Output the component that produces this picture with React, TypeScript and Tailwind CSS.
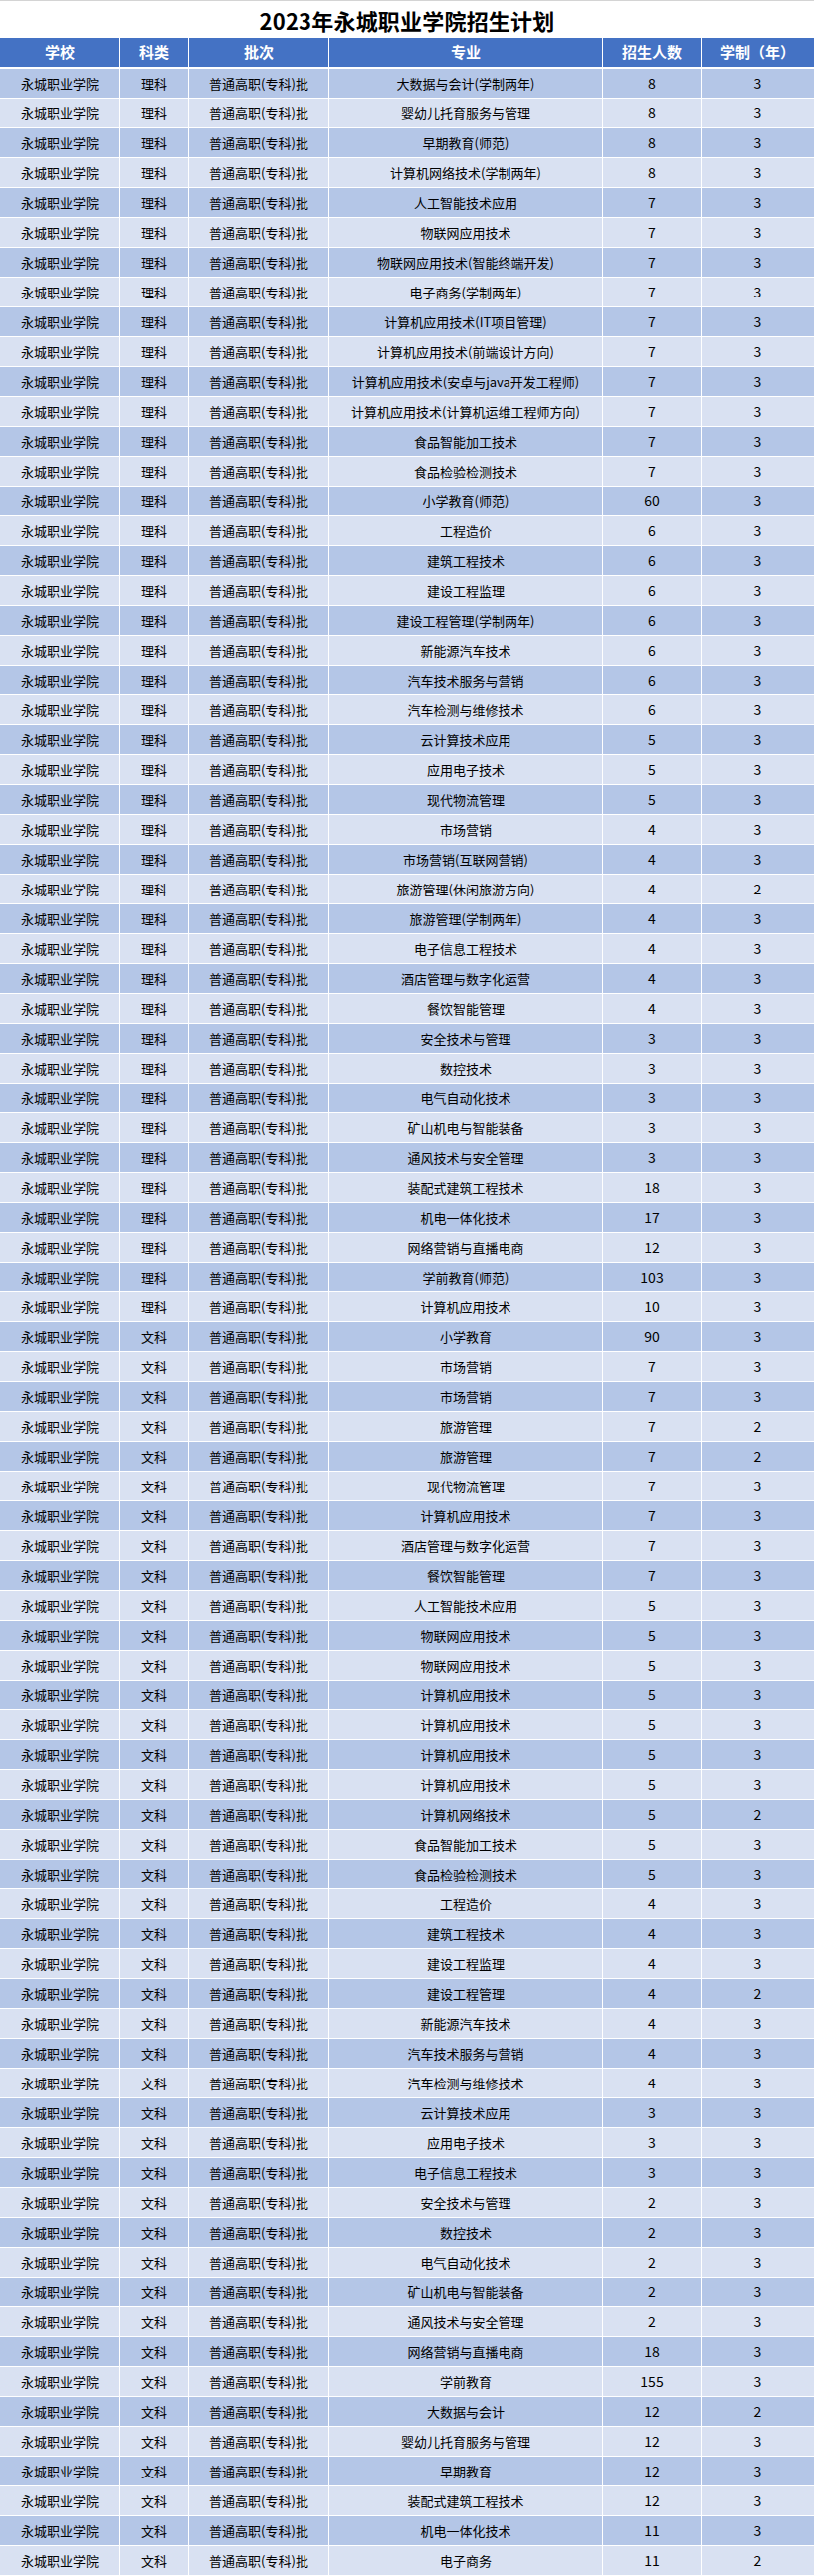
type Row = [string, string, number, number];

const SCHOOL = "永城职业学院";
const BATCH = "普通高职(专科)批";

const rows: Row[] = [
  ["理科", "大数据与会计(学制两年)", 8, 3],
  ["理科", "婴幼儿托育服务与管理", 8, 3],
  ["理科", "早期教育(师范)", 8, 3],
  ["理科", "计算机网络技术(学制两年)", 8, 3],
  ["理科", "人工智能技术应用", 7, 3],
  ["理科", "物联网应用技术", 7, 3],
  ["理科", "物联网应用技术(智能终端开发)", 7, 3],
  ["理科", "电子商务(学制两年)", 7, 3],
  ["理科", "计算机应用技术(IT项目管理)", 7, 3],
  ["理科", "计算机应用技术(前端设计方向)", 7, 3],
  ["理科", "计算机应用技术(安卓与java开发工程师)", 7, 3],
  ["理科", "计算机应用技术(计算机运维工程师方向)", 7, 3],
  ["理科", "食品智能加工技术", 7, 3],
  ["理科", "食品检验检测技术", 7, 3],
  ["理科", "小学教育(师范)", 60, 3],
  ["理科", "工程造价", 6, 3],
  ["理科", "建筑工程技术", 6, 3],
  ["理科", "建设工程监理", 6, 3],
  ["理科", "建设工程管理(学制两年)", 6, 3],
  ["理科", "新能源汽车技术", 6, 3],
  ["理科", "汽车技术服务与营销", 6, 3],
  ["理科", "汽车检测与维修技术", 6, 3],
  ["理科", "云计算技术应用", 5, 3],
  ["理科", "应用电子技术", 5, 3],
  ["理科", "现代物流管理", 5, 3],
  ["理科", "市场营销", 4, 3],
  ["理科", "市场营销(互联网营销)", 4, 3],
  ["理科", "旅游管理(休闲旅游方向)", 4, 2],
  ["理科", "旅游管理(学制两年)", 4, 3],
  ["理科", "电子信息工程技术", 4, 3],
  ["理科", "酒店管理与数字化运营", 4, 3],
  ["理科", "餐饮智能管理", 4, 3],
  ["理科", "安全技术与管理", 3, 3],
  ["理科", "数控技术", 3, 3],
  ["理科", "电气自动化技术", 3, 3],
  ["理科", "矿山机电与智能装备", 3, 3],
  ["理科", "通风技术与安全管理", 3, 3],
  ["理科", "装配式建筑工程技术", 18, 3],
  ["理科", "机电一体化技术", 17, 3],
  ["理科", "网络营销与直播电商", 12, 3],
  ["理科", "学前教育(师范)", 103, 3],
  ["理科", "计算机应用技术", 10, 3],
  ["文科", "小学教育", 90, 3],
  ["文科", "市场营销", 7, 3],
  ["文科", "市场营销", 7, 3],
  ["文科", "旅游管理", 7, 2],
  ["文科", "旅游管理", 7, 2],
  ["文科", "现代物流管理", 7, 3],
  ["文科", "计算机应用技术", 7, 3],
  ["文科", "酒店管理与数字化运营", 7, 3],
  ["文科", "餐饮智能管理", 7, 3],
  ["文科", "人工智能技术应用", 5, 3],
  ["文科", "物联网应用技术", 5, 3],
  ["文科", "物联网应用技术", 5, 3],
  ["文科", "计算机应用技术", 5, 3],
  ["文科", "计算机应用技术", 5, 3],
  ["文科", "计算机应用技术", 5, 3],
  ["文科", "计算机应用技术", 5, 3],
  ["文科", "计算机网络技术", 5, 2],
  ["文科", "食品智能加工技术", 5, 3],
  ["文科", "食品检验检测技术", 5, 3],
  ["文科", "工程造价", 4, 3],
  ["文科", "建筑工程技术", 4, 3],
  ["文科", "建设工程监理", 4, 3],
  ["文科", "建设工程管理", 4, 2],
  ["文科", "新能源汽车技术", 4, 3],
  ["文科", "汽车技术服务与营销", 4, 3],
  ["文科", "汽车检测与维修技术", 4, 3],
  ["文科", "云计算技术应用", 3, 3],
  ["文科", "应用电子技术", 3, 3],
  ["文科", "电子信息工程技术", 3, 3],
  ["文科", "安全技术与管理", 2, 3],
  ["文科", "数控技术", 2, 3],
  ["文科", "电气自动化技术", 2, 3],
  ["文科", "矿山机电与智能装备", 2, 3],
  ["文科", "通风技术与安全管理", 2, 3],
  ["文科", "网络营销与直播电商", 18, 3],
  ["文科", "学前教育", 155, 3],
  ["文科", "大数据与会计", 12, 2],
  ["文科", "婴幼儿托育服务与管理", 12, 3],
  ["文科", "早期教育", 12, 3],
  ["文科", "装配式建筑工程技术", 12, 3],
  ["文科", "机电一体化技术", 11, 3],
  ["文科", "电子商务", 11, 2],
];

const headers = ["学校", "科类", "批次", "专业", "招生人数", "学制（年）"];

const App = () => {
  return (
    <div className="w-[818px] bg-white font-['Noto_Sans_CJK_SC','Microsoft_YaHei',sans-serif] text-black">
      <div className="h-[38px] border-t border-[#d4d4d4] flex items-center justify-center">
        <h1 className="text-[22px] font-bold leading-none tracking-[0.2px]">2023年永城职业学院招生计划</h1>
      </div>

      <div className="grid grid-cols-[120px_68px_140px_274px_98px_113px] gap-x-px h-[29px]">
        {headers.map((h) => (
          <div key={h} className="bg-[#4472C4] flex items-center justify-center text-white text-[15px] font-bold">
            {h}
          </div>
        ))}
      </div>

      <div className="flex flex-col gap-y-px pt-[2px] pb-px">
        {rows.map(([kind, major, count, years], i) => {
          const bg = i % 2 === 0 ? "bg-[#B4C6E7]" : "bg-[#D9E1F2]";
          return (
            <div key={i} className="grid grid-cols-[120px_68px_140px_274px_98px_113px] gap-x-px h-[29px] text-[13px]">
              <div className={`${bg} flex items-center justify-center`}>{SCHOOL}</div>
              <div className={`${bg} flex items-center justify-center`}>{kind}</div>
              <div className={`${bg} flex items-center justify-center`}>{BATCH}</div>
              <div className={`${bg} flex items-center justify-center`}>{major}</div>
              <div className={`${bg} flex items-center justify-center text-[14px]`}>{count}</div>
              <div className={`${bg} flex items-center justify-center text-[14px]`}>{years}</div>
            </div>
          );
        })}
      </div>
    </div>
  );
};

export default App;
